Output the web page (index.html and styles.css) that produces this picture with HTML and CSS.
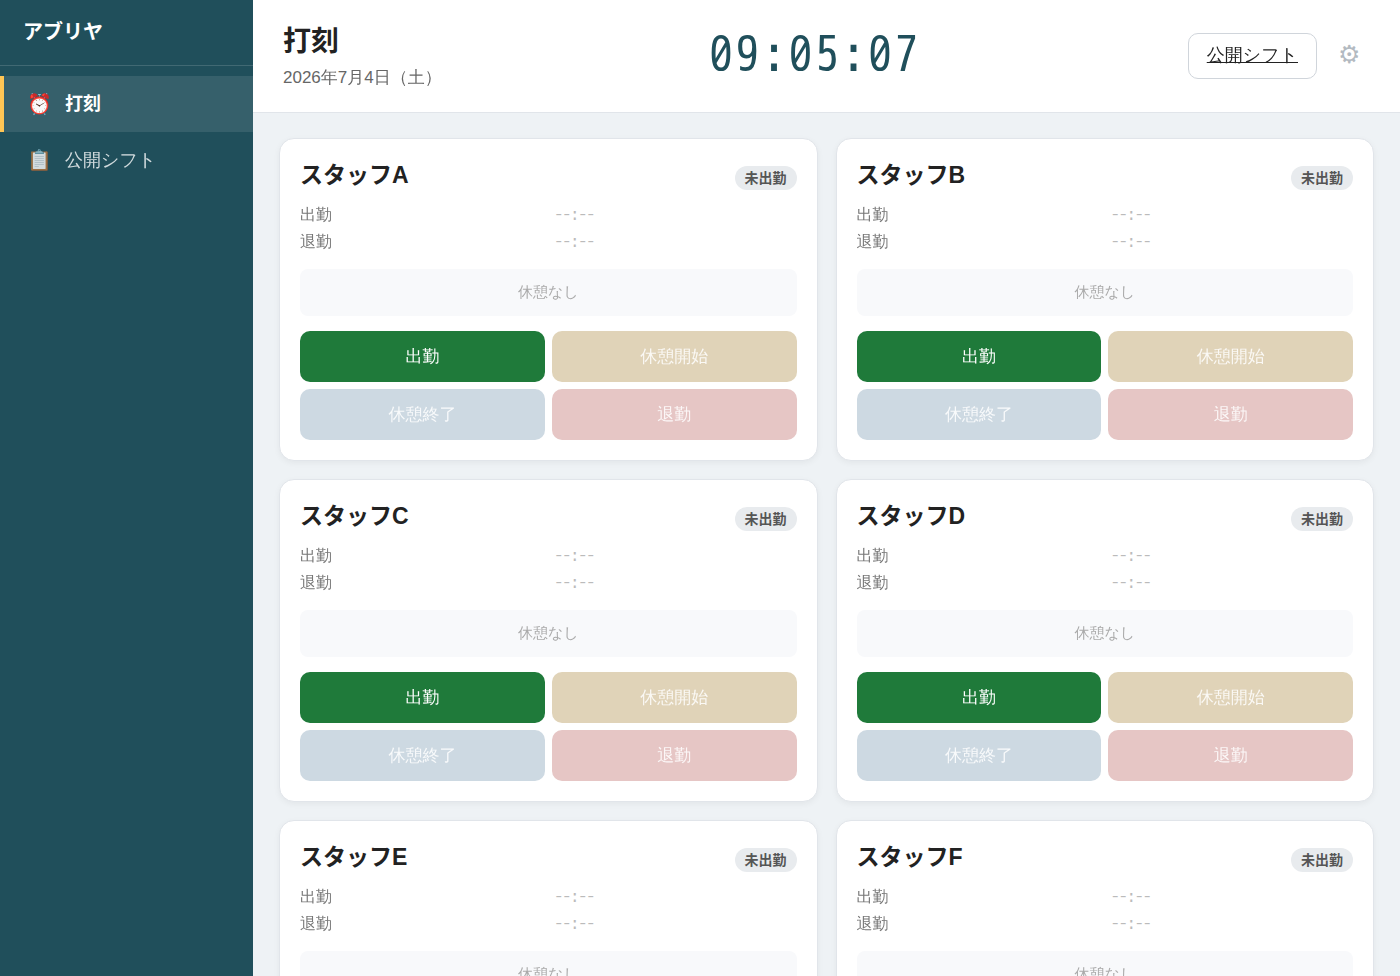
FILE: index.html
```html
<!DOCTYPE html>
<html lang="ja">
<head>
  <meta charset="UTF-8">
  <title>打刻 | アブリヤ</title>
  <meta name="viewport" content="width=device-width, initial-scale=1.0">
  <link rel="stylesheet" href="styles.css">
</head>
<body>
  <div class="layout">
    <aside class="sidebar">
      <div class="brand">アブリヤ</div>
      <nav class="nav">
        <a class="nav-item active" href="#punch"><span class="nav-icon">⏰</span>打刻</a>
        <a class="nav-item" href="#shift"><span class="nav-icon">📋</span>公開シフト</a>
      </nav>
    </aside>

    <div class="main">
      <header class="header">
        <div class="header-title">
          <h1>打刻</h1>
          <p class="date" id="date">2026年7月4日（土）</p>
        </div>
        <div class="clock" id="clock">09:05:07</div>
        <div class="header-actions">
          <a class="shift-link" href="#shift">公開シフト</a>
          <button class="gear" type="button" aria-label="設定">⚙</button>
        </div>
      </header>

      <main class="cards" id="cards"></main>
    </div>
  </div>

  <script src="script.js"></script>
</body>
</html>
```
FILE: styles.css
```css
:root {
  --primary: #204f5b;
  --accent: #ffc655;
  --bg: #eef2f5;
  --border: #e1e5ea;
  --text: #222;
  --muted: #666;
  --font: "Liberation Sans", "WenQuanYi Zen Hei", "Noto Sans CJK JP", sans-serif;
  --font-bold: "Liberation Sans", "Noto Sans CJK JP", sans-serif;
  --font-mono: "WenQuanYi Zen Hei Mono", "Noto Sans Mono CJK JP", monospace;
}

* {
  box-sizing: border-box;
}

body {
  margin: 0;
  background: var(--bg);
  color: var(--text);
  font-family: var(--font);
  font-size: 16px;
}

h1, h2, p, dl, dd {
  margin: 0;
}

h1, h2, .brand, .badge, .nav-item.active {
  font-family: var(--font-bold);
  font-weight: bold;
}

.layout {
  display: flex;
  height: 100vh;
}

/* sidebar */
.sidebar {
  flex: 0 0 253px;
  background: var(--primary);
  color: #fff;
}

.brand {
  padding: 18px 23px;
  font-size: 20px;
  line-height: 29px;
  border-bottom: 1px solid rgba(255,255,255,0.15);
}

.nav {
  padding-top: 10px;
}

.nav-item {
  display: flex;
  align-items: center;
  gap: 12px;
  height: 56px;
  padding: 0 22px;
  border-left: 4px solid transparent;
  color: rgba(255,255,255,0.8);
  font-size: 18px;
  line-height: 24px;
  text-decoration: none;
}

.nav-item.active {
  background: rgba(255,255,255,0.1);
  border-left-color: var(--accent);
  color: #fff;
}

.nav-icon {
  width: 27px;
  font-size: 20px;
  font-weight: normal;
  text-align: center;
}

/* header */
.main {
  flex: 1;
  min-width: 0;
  overflow-y: auto;
  scrollbar-width: none;
}

.header {
  display: flex;
  justify-content: space-between;
  align-items: center;
  padding: 22px 30px;
  background: #fff;
  border-bottom: 1px solid var(--border);
}

.header h1 {
  font-size: 28px;
  line-height: 40px;
}

.date {
  padding-top: 4px;
  color: var(--muted);
  font-size: 17px;
  line-height: 24px;
}

.clock {
  color: var(--primary);
  font-family: var(--font-mono);
  font-size: 49px;
  line-height: 60px;
  letter-spacing: 2px;
}

.header-actions {
  display: flex;
  align-items: center;
  gap: 11px;
}

.shift-link {
  padding: 8px 18px 10px;
  border: 1px solid #d0d5db;
  border-radius: 10px;
  color: var(--text);
  font-size: 18px;
  line-height: 26px;
}

.gear {
  padding: 5px 10px 8px;
  border: none;
  background: none;
  color: #b3bac1;
  font-family: inherit;
  font-size: 25px;
  cursor: pointer;
}

/* staff cards */
.cards {
  display: grid;
  grid-template-columns: 1fr 1fr;
  gap: 18px;
  padding: 25px 26px;
}

.card {
  padding: 20px;
  background: #fff;
  border: 1px solid var(--border);
  border-radius: 15px;
  box-shadow: 0 2px 6px rgba(0,0,0,0.05);
}

.card-head {
  display: flex;
  justify-content: space-between;
  align-items: center;
  padding-bottom: 12px;
}

.card-head h2 {
  font-size: 23px;
  line-height: 32px;
}

.badge {
  margin-top: 6px;
  padding: 0 10px;
  border-radius: 12px;
  background: #e8ebee;
  color: #555;
  font-size: 14px;
  line-height: 24px;
}

.times {
  display: grid;
  grid-template-columns: 1fr 1fr;
  gap: 4px 13px;
  line-height: 23px;
}

.times dt {
  color: #777;
}

.times dd {
  padding-top: 1px;
  color: #bbb;
  font-family: var(--font-mono);
  line-height: 22px;
}

.breaks {
  margin: 16px 0 15px;
  padding: 11px 12px 13px;
  border-radius: 8px;
  background: #f8f9fb;
  color: #aaa;
  font-size: 15px;
  line-height: 23px;
  text-align: center;
}

.actions {
  display: grid;
  grid-template-columns: 1fr 1fr;
  gap: 7px;
}

.btn {
  height: 51px;
  border: none;
  border-radius: 10px;
  color: #fff;
  font-family: inherit;
  font-size: 17px;
  cursor: pointer;
}

.btn:disabled {
  color: rgba(255,255,255,0.85);
  cursor: not-allowed;
}

.btn-in {
  background: #1f7a3a;
}

.btn-break-start {
  background: #e0d3b8;
}

.btn-break-end {
  background: #cdd9e2;
}

.btn-out {
  background: #e6c6c5;
}
```
FILE: script.js
```js
const staff = ["A", "B", "C", "D", "E", "F"];
const cards = document.getElementById("cards");

function renderCard(name) {
  return `
    <section class="card">
      <div class="card-head">
        <h2>スタッフ${name}</h2>
        <span class="badge">未出勤</span>
      </div>
      <dl class="times">
        <dt>出勤</dt><dd>--:--</dd>
        <dt>退勤</dt><dd>--:--</dd>
      </dl>
      <div class="breaks">休憩なし</div>
      <div class="actions">
        <button type="button" class="btn btn-in">出勤</button>
        <button type="button" class="btn btn-break-start" disabled>休憩開始</button>
        <button type="button" class="btn btn-break-end" disabled>休憩終了</button>
        <button type="button" class="btn btn-out" disabled>退勤</button>
      </div>
    </section>`;
}

cards.innerHTML = staff.map(renderCard).join("");
```
